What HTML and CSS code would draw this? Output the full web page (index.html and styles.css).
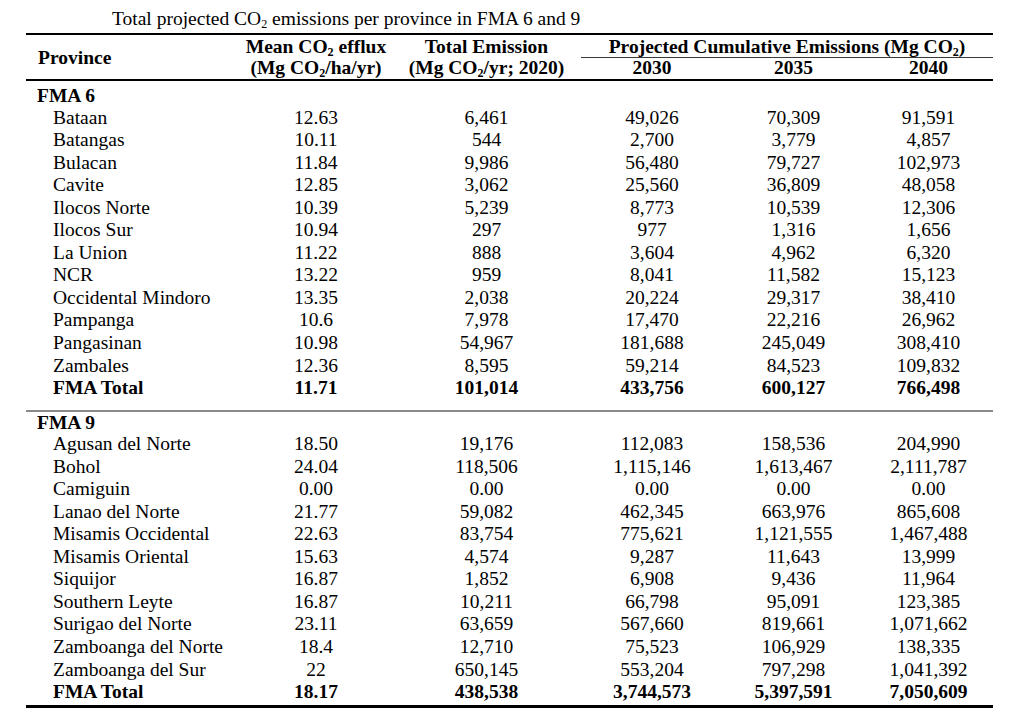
FILE: index.html
```html
<!DOCTYPE html>
<html lang="en">
<head>
<meta charset="utf-8">
<title>Total projected CO2 emissions per province in FMA 6 and 9</title>
<link rel="stylesheet" href="styles.css">
</head>
<body>
<div class="page">
  <div class="caption">Total projected CO<sub class="sub">2</sub> emissions per province in FMA 6 and 9</div>
  <table class="data">
    <colgroup>
      <col class="c-prov"><col class="c-mean"><col class="c-total"><col class="c-y1"><col class="c-y2"><col class="c-y3">
    </colgroup>
    <thead>
      <tr class="h1">
        <th class="prov" rowspan="2">Province</th>
        <th>Mean CO<sub class="sub">2</sub> efflux</th>
        <th>Total Emission</th>
        <th class="proj" colspan="3">Projected Cumulative Emissions (Mg CO<sub class="sub">2</sub>)</th>
      </tr>
      <tr class="h2">
        <th>(Mg CO<sub class="sub">2</sub>/ha/yr)</th>
        <th>(Mg CO<sub class="sub">2</sub>/yr; 2020)</th>
        <th>2030</th>
        <th>2035</th>
        <th>2040</th>
      </tr>
    </thead>
    <tbody>
      <tr class="group first"><td colspan="6">FMA 6</td></tr>
      <tr><td class="name">Bataan</td><td>12.63</td><td>6,461</td><td>49,026</td><td>70,309</td><td>91,591</td></tr>
      <tr><td class="name">Batangas</td><td>10.11</td><td>544</td><td>2,700</td><td>3,779</td><td>4,857</td></tr>
      <tr><td class="name">Bulacan</td><td>11.84</td><td>9,986</td><td>56,480</td><td>79,727</td><td>102,973</td></tr>
      <tr><td class="name">Cavite</td><td>12.85</td><td>3,062</td><td>25,560</td><td>36,809</td><td>48,058</td></tr>
      <tr><td class="name">Ilocos Norte</td><td>10.39</td><td>5,239</td><td>8,773</td><td>10,539</td><td>12,306</td></tr>
      <tr><td class="name">Ilocos Sur</td><td>10.94</td><td>297</td><td>977</td><td>1,316</td><td>1,656</td></tr>
      <tr><td class="name">La Union</td><td>11.22</td><td>888</td><td>3,604</td><td>4,962</td><td>6,320</td></tr>
      <tr><td class="name">NCR</td><td>13.22</td><td>959</td><td>8,041</td><td>11,582</td><td>15,123</td></tr>
      <tr><td class="name">Occidental Mindoro</td><td>13.35</td><td>2,038</td><td>20,224</td><td>29,317</td><td>38,410</td></tr>
      <tr><td class="name">Pampanga</td><td>10.6</td><td>7,978</td><td>17,470</td><td>22,216</td><td>26,962</td></tr>
      <tr><td class="name">Pangasinan</td><td>10.98</td><td>54,967</td><td>181,688</td><td>245,049</td><td>308,410</td></tr>
      <tr><td class="name">Zambales</td><td>12.36</td><td>8,595</td><td>59,214</td><td>84,523</td><td>109,832</td></tr>
      <tr class="total mid"><td class="name">FMA Total</td><td>11.71</td><td>101,014</td><td>433,756</td><td>600,127</td><td>766,498</td></tr>
      <tr class="group sep"><td colspan="6">FMA 9</td></tr>
      <tr><td class="name">Agusan del Norte</td><td>18.50</td><td>19,176</td><td>112,083</td><td>158,536</td><td>204,990</td></tr>
      <tr><td class="name">Bohol</td><td>24.04</td><td>118,506</td><td>1,115,146</td><td>1,613,467</td><td>2,111,787</td></tr>
      <tr><td class="name">Camiguin</td><td>0.00</td><td>0.00</td><td>0.00</td><td>0.00</td><td>0.00</td></tr>
      <tr><td class="name">Lanao del Norte</td><td>21.77</td><td>59,082</td><td>462,345</td><td>663,976</td><td>865,608</td></tr>
      <tr><td class="name">Misamis Occidental</td><td>22.63</td><td>83,754</td><td>775,621</td><td>1,121,555</td><td>1,467,488</td></tr>
      <tr><td class="name">Misamis Oriental</td><td>15.63</td><td>4,574</td><td>9,287</td><td>11,643</td><td>13,999</td></tr>
      <tr><td class="name">Siquijor</td><td>16.87</td><td>1,852</td><td>6,908</td><td>9,436</td><td>11,964</td></tr>
      <tr><td class="name">Southern Leyte</td><td>16.87</td><td>10,211</td><td>66,798</td><td>95,091</td><td>123,385</td></tr>
      <tr><td class="name">Surigao del Norte</td><td>23.11</td><td>63,659</td><td>567,660</td><td>819,661</td><td>1,071,662</td></tr>
      <tr><td class="name">Zamboanga del Norte</td><td>18.4</td><td>12,710</td><td>75,523</td><td>106,929</td><td>138,335</td></tr>
      <tr><td class="name">Zamboanga del Sur</td><td>22</td><td>650,145</td><td>553,204</td><td>797,298</td><td>1,041,392</td></tr>
      <tr class="total last"><td class="name">FMA Total</td><td>18.17</td><td>438,538</td><td>3,744,573</td><td>5,397,591</td><td>7,050,609</td></tr>
    </tbody>
  </table>
</div>
</body>
</html>
```

FILE: styles.css
```css
html, body {
  margin: 0;
  padding: 0;
  background: #ffffff;
}

body {
  font-family: "Liberation Serif", "Times New Roman", serif;
  font-size: 19.5px;
  color: #000000;
}

.page {
  padding-left: 26px;
}

.caption {
  margin-left: 86px;
  padding-top: 8px;
  height: 25px;
  line-height: 22px;
  white-space: nowrap;
}

.sub {
  font-size: 0.62em;
  vertical-align: -0.22em;
  line-height: 0;
}

.data {
  width: 967px;
  table-layout: fixed;
  border-collapse: separate;
  border-spacing: 0;
}

.c-prov { width: 214px; }
.c-mean { width: 152px; }
.c-total { width: 189px; }
.c-y1 { width: 142px; }
.c-y2 { width: 141px; }
.c-y3 { width: 129px; }

.data th {
  font-weight: bold;
  text-align: center;
  padding: 0;
  line-height: 20px;
  white-space: nowrap;
}

.h1 th {
  border-top: 2px solid #000;
  padding-top: 2px;
  vertical-align: top;
}

.h1 th.proj {
  border-bottom: 1px solid #3a3a3a;
}

.h2 th {
  border-bottom: 2px solid #000;
  padding-bottom: 1px;
  vertical-align: top;
}

.data th.prov {
  text-align: left;
  padding-left: 12px;
  vertical-align: middle;
  border-bottom: 2px solid #000;
}

.data td {
  padding: 0;
  text-align: center;
  line-height: 22.55px;
  white-space: nowrap;
}

.data td.name {
  text-align: left;
  padding-left: 27px;
}

.group td {
  font-weight: bold;
  text-align: left;
  padding-left: 11px;
  line-height: 21.5px;
}

.group.first td {
  padding-top: 4px;
}

.group.sep td {
  border-top: 2px solid #8a8a8a;
}

.total td {
  font-weight: bold;
}

.total.mid td {
  padding-bottom: 10px;
}

.total.last td {
  padding-bottom: 1px;
  border-bottom: 3px solid #000;
}
```
